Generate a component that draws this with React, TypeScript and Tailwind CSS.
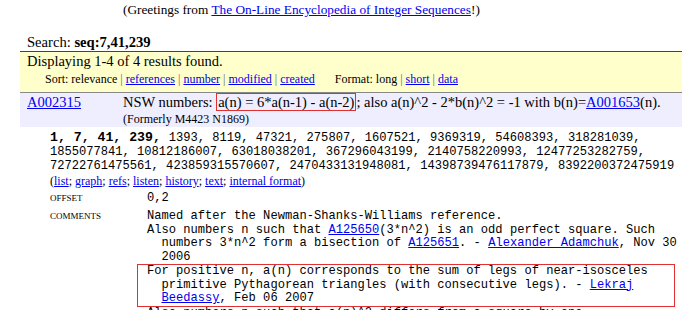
import React from "react";

const serif = { fontFamily: '"Liberation Serif", "Times New Roman", serif' };
const mono = { fontFamily: '"Liberation Mono", "Courier New", monospace' };

function L({ children }: { children: React.ReactNode }) {
  return <span className="text-[#0000ee] underline">{children}</span>;
}

function Sep() {
  return <span className="text-[#666]"> | </span>;
}

export default function App() {
  return (
    <div className="w-[682px] h-[310px] overflow-hidden bg-white text-black" style={serif}>
      <div className="w-[900px]">
        {/* greeting */}
        <div className="h-[20px] leading-[20px] pl-[123px] text-[13.3px] whitespace-nowrap">
          (Greetings from <L>The On-Line Encyclopedia of Integer Sequences</L>!)
        </div>

        {/* search */}
        <div className="mt-[13px] ml-[20px] pl-[7px] h-[19px] leading-[18px] text-[14.6px] border-b border-[#444] whitespace-nowrap">
          Search: <b>seq:7,41,239</b>
        </div>

        {/* yellow bar */}
        <div className="ml-[20px] bg-[#ffffcc] border-b border-[#888] h-[41px] whitespace-nowrap">
          <div className="pl-[7px] h-[18px] leading-[18px] text-[14.5px]">
            Displaying 1-4 of 4 results found.
          </div>
          <div className="flex h-[18px] leading-[18px] text-[12px] pl-[25px]">
            <div>
              Sort: relevance<Sep />
              <L>references</L>
              <Sep />
              <L>number</L>
              <Sep />
              <L>modified</L>
              <Sep />
              <L>created</L>
            </div>
            <div className="ml-[20px]">
              Format: long<Sep />
              <L>short</L>
              <Sep />
              <L>data</L>
            </div>
          </div>
        </div>

        {/* sequence header row */}
        <div className="ml-[20px] bg-[#eeeeff] h-[34px] whitespace-nowrap">
          <div className="flex h-[20px] items-center text-[14.5px]">
            <div className="w-[103px] pl-[7px]">
              <L>A002315</L>
            </div>
            <div>
              NSW numbers:{" "}
              <span className="border border-[#e03030] px-[1px] leading-[16px] inline-block">
                a(n) = 6*a(n-1) - a(n-2)
              </span>
              ; also a(n)^2 - 2*b(n)^2 = -1 with b(n)=<L>A001653</L>(n).
            </div>
          </div>
          <div className="pl-[103px] h-[12px] leading-[12px] text-[12px]">(Formerly M4423 N1869)</div>
        </div>

        {/* data */}
        <div className="pl-[50px] pt-[3px] whitespace-pre text-[12.1px]" style={mono}>
          <div className="h-[15px] leading-[15px]">
            <b className="text-[13.2px]">1, 7, 41, 239, </b>
            1393, 8119, 47321, 275807, 1607521, 9369319, 54608393, 318281039,
          </div>
          <div className="h-[14px] leading-[14px]">
            1855077841, 10812186007, 63018038201, 367296043199, 2140758220993, 12477253282759,
          </div>
          <div className="h-[14px] leading-[14px]">
            72722761475561, 423859315570607, 2470433131948081, 14398739476117879, 8392200372475919
          </div>
        </div>

        <div className="pl-[50px] mt-[1px] h-[14px] leading-[14px] text-[12px] whitespace-nowrap">
          (<L>list</L>; <L>graph</L>; <L>refs</L>; <L>listen</L>; <L>history</L>; <L>text</L>;{" "}
          <L>internal format</L>)
        </div>

        {/* offset */}
        <div className="flex pl-[50px] mt-[3px] h-[14px] items-center">
          <div className="w-[97px] text-[9px] leading-[14px]">OFFSET</div>
          <div className="text-[12.1px] leading-[14px]" style={mono}>
            0,2
          </div>
        </div>

        {/* comments */}
        <div className="flex pl-[50px] mt-[5px]">
          <div className="w-[97px] text-[9px] leading-[13.5px]">COMMENTS</div>
          <div className="text-[12.1px] leading-[13.5px] whitespace-pre" style={mono}>
            <div>Named after the Newman-Shanks-Williams reference.</div>
            <div>
              Also numbers n such that <L>A125650</L>(3*n^2) is an odd perfect square. Such
            </div>
            <div>
              {"  numbers 3*n^2 form a bisection of "}
              <L>A125651</L>. - <L>Alexander Adamchuk</L>, Nov 30
            </div>
            <div>{"  2006"}</div>
            <div className="-ml-[10px] pl-[9px] w-[538px] border border-[#e03030]">
              <div>For positive n, a(n) corresponds to the sum of legs of near-isosceles</div>
              <div>
                {"  primitive Pythagorean triangles (with consecutive legs). - "}
                <L>Lekraj</L>
              </div>
              <div>
                {"  "}
                <L>Beedassy</L>, Feb 06 2007
              </div>
            </div>
            <div>Also numbers n such that a(n)^2 differs from a square by one.</div>
          </div>
        </div>
      </div>
    </div>
  );
}
